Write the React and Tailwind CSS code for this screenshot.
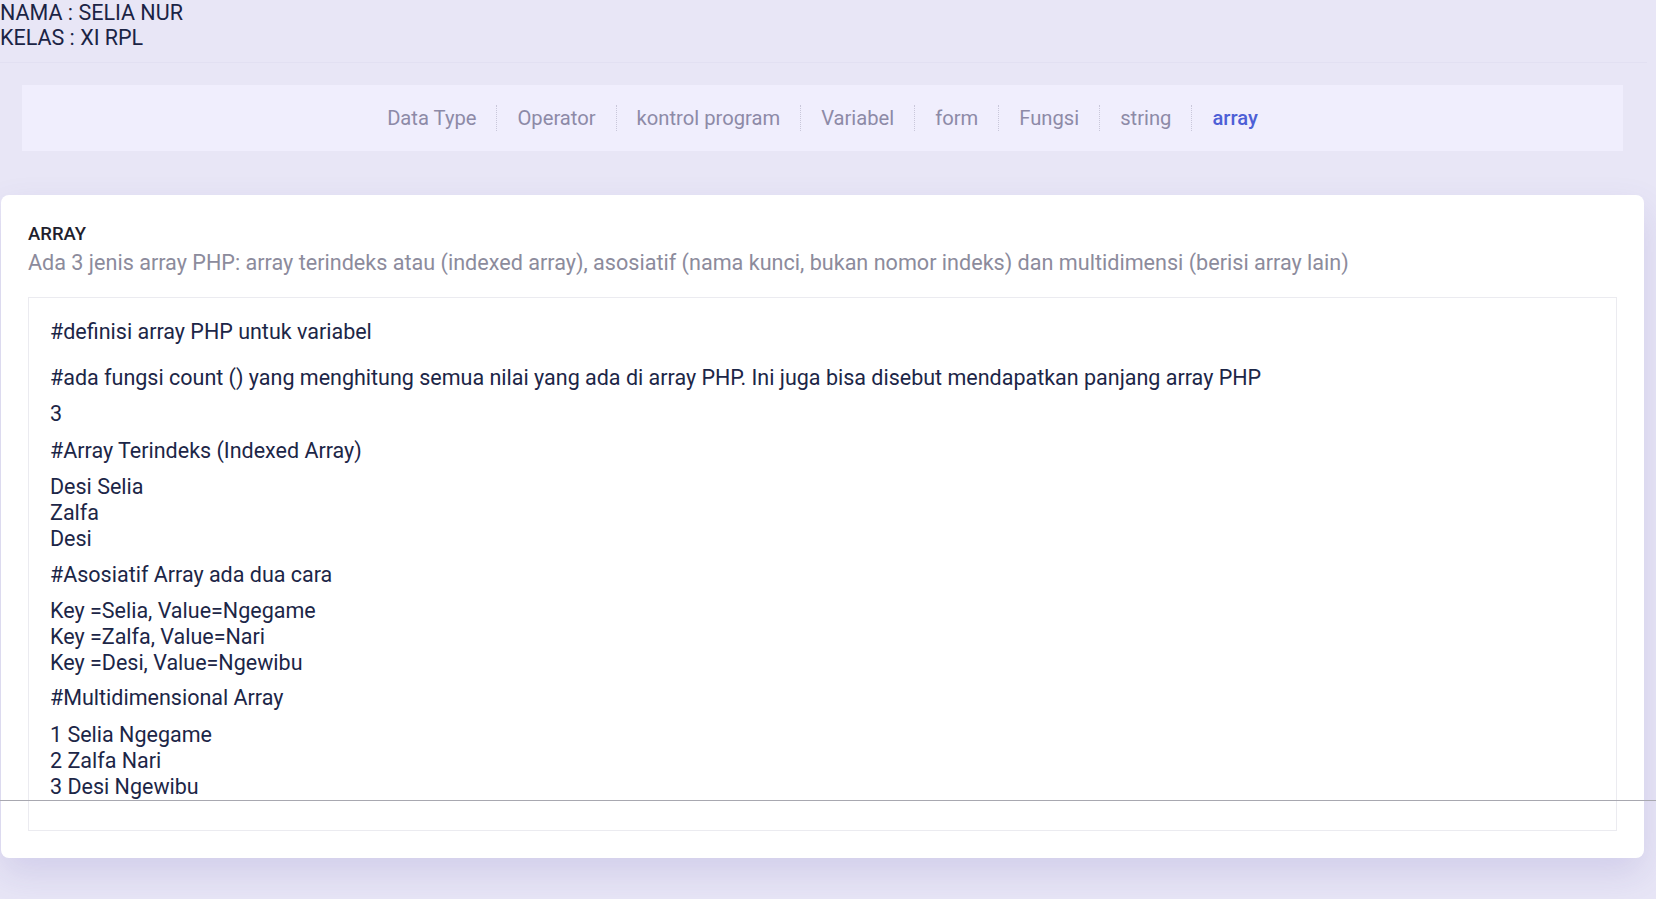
import React from "react";

const menu = ["Data Type", "Operator", "kontrol program", "Variabel", "form", "Fungsi", "string", "array"];

const App = () => {
  return (
    <div className="relative min-h-screen overflow-hidden bg-[#e8e6f6] font-['Roboto',sans-serif]">
      <div className="text-[21.5px] leading-[25px] text-[#1b2445]">
        <div>NAMA : SELIA NUR</div>
        <div>KELAS : XI RPL</div>
      </div>

      <div className="mt-3 w-[1647px] border-t border-[#e2e0f2] pt-[22px] pb-[44px]">
        <nav className="ml-[22px] mr-[24px] flex h-[66px] items-center justify-center bg-[#f0eefd]">
          {menu.map((item, i) => (
            <a
              key={item}
              href="#"
              className={
                (i > 0 ? "border-l border-dotted border-[#c9c7da] " : "") +
                (item === "array" ? "text-[#4d5fd6] font-medium " : "text-[#8d8aa7] ") +
                "px-5 text-[20.2px] leading-[26px]"
              }
            >
              {item}
            </a>
          ))}
        </nav>
      </div>

      <div className="ml-px w-[1643px] rounded-lg bg-white px-[27px] pt-[28px] pb-[27px] shadow-[0_16px_36px_rgba(92,80,175,0.16)]">
        <h5 className="text-[18.5px] font-medium leading-[22px] text-[#1f1f2e]">ARRAY</h5>
        <p className="mt-1 text-[21.6px] leading-[28px] text-[#8c8b9c]">
          Ada 3 jenis array PHP: array terindeks atau (indexed array), asosiatif (nama kunci, bukan nomor indeks) dan multidimensi (berisi array lain)
        </p>

        <div className="mt-[20px] border border-[#ebebf0] px-[21px] pt-[21px] pb-[30px] text-[21.5px] leading-[26px] text-[#1c2647]">
          <p className="mb-5">#definisi array PHP untuk variabel</p>
          <p className="mb-[10px]">
            #ada fungsi count () yang menghitung semua nilai yang ada di array PHP. Ini juga bisa disebut mendapatkan panjang array PHP
          </p>
          <p className="mb-[11px]">3</p>
          <p className="mb-[10px]">#Array Terindeks (Indexed Array)</p>
          <div className="mb-[10px]">
            Desi Selia
            <br />
            Zalfa
            <br />
            Desi
          </div>
          <p className="mb-[10px]">#Asosiatif Array ada dua cara</p>
          <div className="mb-[9px]">
            Key =Selia, Value=Ngegame
            <br />
            Key =Zalfa, Value=Nari
            <br />
            Key =Desi, Value=Ngewibu
          </div>
          <p className="mb-[11px]">#Multidimensional Array</p>
          <div>
            1 Selia Ngegame
            <br />
            2 Zalfa Nari
            <br />
            3 Desi Ngewibu
          </div>
        </div>
      </div>

      <div className="absolute left-0 right-0 top-[800px] h-px bg-[#a8a8b0]" />
    </div>
  );
};

export default App;
